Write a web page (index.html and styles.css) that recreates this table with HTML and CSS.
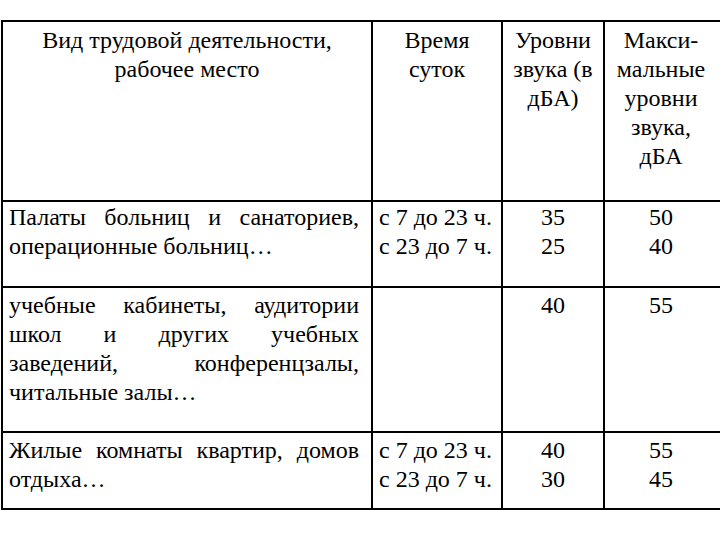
FILE: index.html
```html
<!DOCTYPE html>
<html lang="ru">
<head>
<meta charset="utf-8">
<title>Уровни звука</title>
<link rel="stylesheet" href="styles.css">
</head>
<body>
<table class="noise">
  <colgroup>
    <col class="c1">
    <col class="c2">
    <col class="c3">
    <col class="c4">
  </colgroup>
  <tr class="r-head">
    <td class="center">Вид трудовой деятельности,<br>рабочее место</td>
    <td class="center">Время<br>суток</td>
    <td class="center">Уровни<br>звука (в<br>дБА)</td>
    <td class="center last">Макси-<br>мальные<br>уровни<br>звука,<br>дБА</td>
  </tr>
  <tr class="r1">
    <td class="just"><span class="jl">Палаты больниц и санаториев,</span><span class="ll">операционные больниц…</span></td>
    <td class="left">с 7 до 23 ч.<br>с 23 до 7 ч.</td>
    <td class="center">35<br>25</td>
    <td class="center last">50<br>40</td>
  </tr>
  <tr class="r2">
    <td class="just"><span class="jl">учебные кабинеты, аудитории</span><span class="jl">школ и других учебных</span><span class="jl">заведений, конференцзалы,</span><span class="ll">читальные залы…</span></td>
    <td class="left"></td>
    <td class="center">40</td>
    <td class="center last">55</td>
  </tr>
  <tr class="r3">
    <td class="just"><span class="jl">Жилые комнаты квартир, домов</span><span class="ll">отдыха…</span></td>
    <td class="left">с 7 до 23 ч.<br>с 23 до 7 ч.</td>
    <td class="center">40<br>30</td>
    <td class="center last">55<br>45</td>
  </tr>
</table>
</body>
</html>
```
FILE: styles.css
```css
html, body {
  margin: 0;
  padding: 0;
  background: #fff;
  overflow: hidden;
}
body {
  width: 720px;
  height: 540px;
}
.noise {
  margin: 20px 0 0 1px;
  border-collapse: collapse;
  table-layout: fixed;
  width: 726px;
  font-family: "Liberation Serif", "Times New Roman", serif;
  font-size: 24px;
  line-height: 29px;
  color: #000;
}
.c1 { width: 370px; }
.c2 { width: 130px; }
.c3 { width: 102px; }
.c4 { width: 124px; }
.noise td {
  border: 2px solid #000;
  vertical-align: top;
  padding: 4px 6px 0 6px;
}
.noise td.last { padding-right: 16px; }
.r-head td { height: 174px; padding-top: 4px; }
.r1 td { height: 83px; padding-top: 1px; }
.r2 td { height: 140px; padding-top: 3px; }
.r3 td { height: 72px; padding-top: 3px; }
.center { text-align: center; }
.left { text-align: left; }
.noise td.just { padding-right: 12px; }
.jl {
  display: block;
  text-align: justify;
  text-align-last: justify;
}
.ll {
  display: block;
  text-align: left;
}
```
